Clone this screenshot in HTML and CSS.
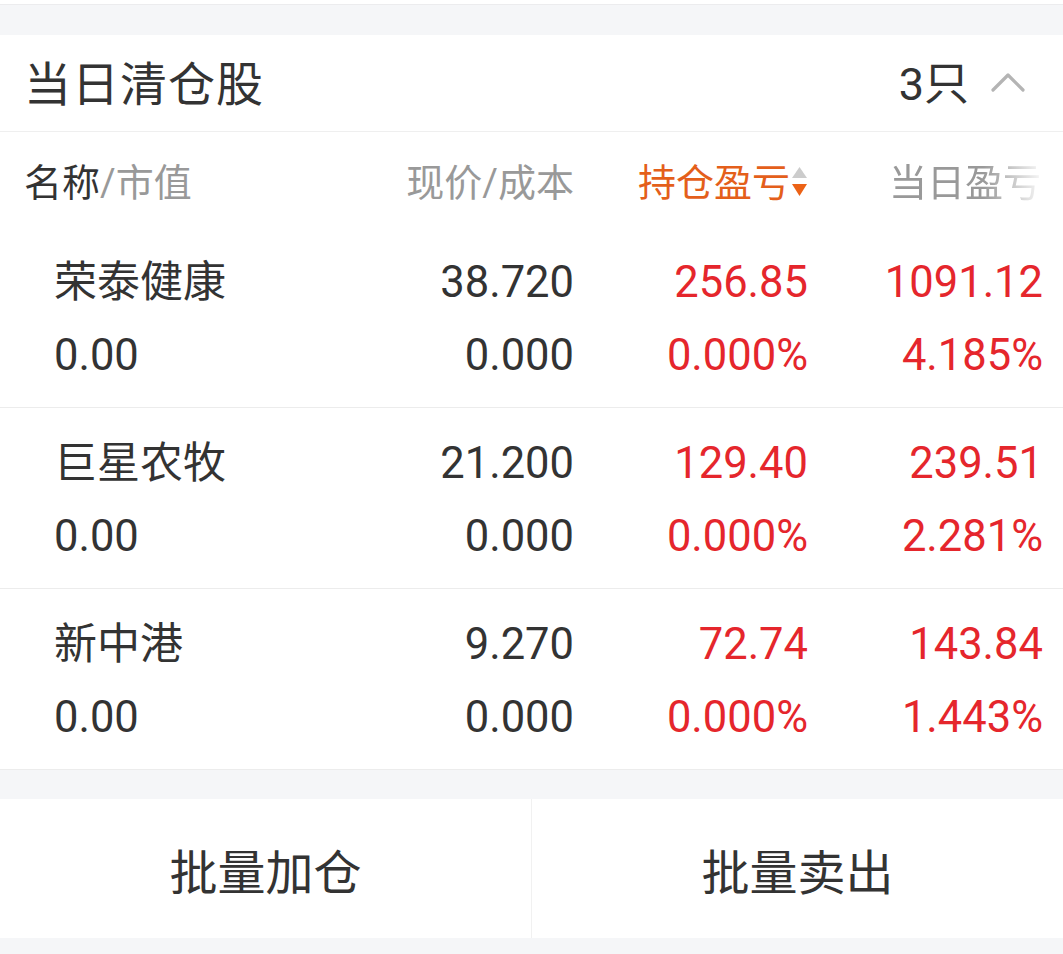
FILE: index.html
```html
<!DOCTYPE html>
<html lang="zh-CN">

<head>
    <meta charset="UTF-8">
    <meta name="viewport" content="width=device-width, initial-scale=1.0">
    <title>当日清仓股</title>
    <link rel="stylesheet" href="styles.css">
</head>

<body>
    <div class="top-gap"></div>

    <div class="panel">
        <div class="panel-head">
            <div class="panel-title">当日清仓股</div>
            <div class="panel-count">
                <span>3只</span>
                <svg class="chevron" width="34" height="20" viewBox="0 0 34 20">
                    <polyline points="2,18 17,3 32,18" fill="none" stroke="#b4b4b4" stroke-width="3.2"
                        stroke-linecap="round" stroke-linejoin="round" />
                </svg>
            </div>
        </div>

        <div class="col-head">
            <div class="cell-left"><span class="dark">名称</span>/市值</div>
            <div class="cell-right">现价/成本</div>
            <div class="cell-right sort-active">
                持仓盈亏
                <span class="sort-arrows">
                    <svg width="17" height="32" viewBox="0 0 17 32">
                        <polygon points="8.5,1 16,12 1,12" fill="#cccccc" />
                        <polygon points="1,18 16,18 8.5,30" fill="#ec6216" />
                    </svg>
                </span>
            </div>
            <div class="cell-right fade">当日盈亏</div>
        </div>

        <div class="stock-row">
            <div class="cell-left">
                <div class="name">荣泰健康</div>
                <div>0.00</div>
            </div>
            <div class="cell-right">
                <div>38.720</div>
                <div>0.000</div>
            </div>
            <div class="cell-right up">
                <div>256.85</div>
                <div>0.000%</div>
            </div>
            <div class="cell-right up">
                <div>1091.12</div>
                <div>4.185%</div>
            </div>
        </div>

        <div class="stock-row">
            <div class="cell-left">
                <div class="name">巨星农牧</div>
                <div>0.00</div>
            </div>
            <div class="cell-right">
                <div>21.200</div>
                <div>0.000</div>
            </div>
            <div class="cell-right up">
                <div>129.40</div>
                <div>0.000%</div>
            </div>
            <div class="cell-right up">
                <div>239.51</div>
                <div>2.281%</div>
            </div>
        </div>

        <div class="stock-row">
            <div class="cell-left">
                <div class="name">新中港</div>
                <div>0.00</div>
            </div>
            <div class="cell-right">
                <div>9.270</div>
                <div>0.000</div>
            </div>
            <div class="cell-right up">
                <div>72.74</div>
                <div>0.000%</div>
            </div>
            <div class="cell-right up">
                <div>143.84</div>
                <div>1.443%</div>
            </div>
        </div>
    </div>

    <div class="mid-gap"></div>

    <div class="actions">
        <div class="action-btn">批量加仓</div>
        <div class="action-btn">批量卖出</div>
    </div>

    <div class="bottom-gap"></div>
</body>

</html>
```

FILE: styles.css
```css
* {
    margin: 0;
    padding: 0;
    box-sizing: border-box;
}

body {
    width: 1063px;
    height: 954px;
    background: #f5f6f8;
    font-family: Roboto, "Noto Sans CJK SC", sans-serif;
    color: #333333;
    overflow: hidden;
}

.top-gap {
    height: 35px;
    border-top: 4px solid #ffffff;
    background: #f5f6f8;
    box-shadow: inset 0 1px 0 #ececee;
}

.panel {
    background: #ffffff;
    border-bottom: 1px solid #ececec;
}

.panel-head {
    height: 97px;
    display: flex;
    align-items: center;
    justify-content: space-between;
    padding: 0 38px 6px 24px;
    border-bottom: 1px solid #efefef;
}

.panel-title {
    font-size: 47px;
    color: #333333;
    letter-spacing: 1px;
}

.panel-count {
    display: flex;
    align-items: center;
    gap: 22px;
    font-size: 45px;
    color: #333333;
}

.chevron {
    margin-top: 4px;
}

.col-head,
.stock-row {
    display: grid;
    grid-template-columns: 1fr 234px 234px 235px;
    padding-right: 20px;
}

.col-head {
    height: 95px;
    padding-left: 24px;
    align-items: center;
    font-size: 38px;
    color: #999999;
}

.cell-left {
    text-align: left;
}

.cell-right {
    text-align: right;
}

.dark {
    color: #333333;
}

.sort-active {
    color: #e45f1b;
    display: flex;
    align-items: center;
    justify-content: flex-end;
}

.sort-arrows {
    display: flex;
    margin-left: 1px;
    margin-top: 4px;
}

.fade {
    white-space: nowrap;
    text-align: left;
    padding-left: 81px;
    -webkit-mask-image: linear-gradient(to right, #000 0, #000 175px, rgba(0, 0, 0, 0.1) 232px);
    mask-image: linear-gradient(to right, #000 0, #000 175px, rgba(0, 0, 0, 0.1) 232px);
}

.stock-row {
    height: 181px;
    padding-left: 54px;
    padding-top: 19px;
    font-size: 43.5px;
    line-height: 73px;
    border-top: 1px solid #ececec;
}

.col-head + .stock-row {
    border-top: none;
    height: 180px;
}

.name {
    font-size: 43px;
}

.up {
    color: #e5262c;
}

.mid-gap {
    height: 29px;
}

.actions {
    display: flex;
    height: 139px;
    background: #ffffff;
}

.action-btn {
    flex: 1;
    display: flex;
    align-items: center;
    justify-content: center;
    font-size: 48px;
    color: #333333;
}

.action-btn + .action-btn {
    border-left: 1px solid #f1f1f1;
}

.bottom-gap {
    height: 16px;
}
```
